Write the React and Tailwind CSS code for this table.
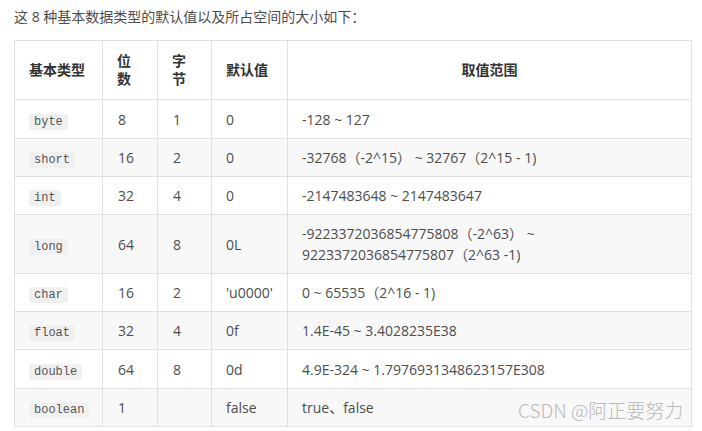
import React from 'react';

const rows = [
  { type: 'byte', bits: '8', bytes: '1', def: '0', range: '-128 ~ 127', h: 'h-[39px]' },
  { type: 'short', bits: '16', bytes: '2', def: '0', range: '-32768（-2^15） ~ 32767（2^15 - 1)', h: 'h-[38px]' },
  { type: 'int', bits: '32', bytes: '4', def: '0', range: '-2147483648 ~ 2147483647', h: 'h-[38px]' },
  {
    type: 'long',
    bits: '64',
    bytes: '8',
    def: '0L',
    range: ['-9223372036854775808（-2^63） ~', '9223372036854775807（2^63 -1)'],
    h: 'h-[59px]',
  },
  { type: 'char', bits: '16', bytes: '2', def: "'u0000'", range: '0 ~ 65535（2^16 - 1)', h: 'h-[38px]' },
  { type: 'float', bits: '32', bytes: '4', def: '0f', range: '1.4E-45 ~ 3.4028235E38', h: 'h-[38px]' },
  { type: 'double', bits: '64', bytes: '8', def: '0d', range: '4.9E-324 ~ 1.7976931348623157E308', h: 'h-[39px]' },
  { type: 'boolean', bits: '1', bytes: '', def: 'false', range: 'true、false', h: 'h-[38px]' },
];

export default function App() {
  return (
    <div className="relative w-[702px] h-[431px] bg-white overflow-hidden font-['Open_Sans','Noto_Sans_CJK_SC',sans-serif] text-[14px] text-[#4d4d4d]">
      <p className="pl-[14px] pt-[7px] h-[40px] leading-[20px]">这 8 种基本数据类型的默认值以及所占空间的大小如下：</p>

      <table className="ml-[14px] w-[677px] table-fixed border-collapse">
        <colgroup>
          <col className="w-[88px]" />
          <col className="w-[55px]" />
          <col className="w-[54px]" />
          <col className="w-[76px]" />
          <col className="w-[404px]" />
        </colgroup>
        <thead>
          <tr className="h-[59px] text-[#333] font-bold leading-[18px]">
            <th className="border border-[#dfe2e5] px-[14px] text-left font-bold">基本类型</th>
            <th className="border border-[#dfe2e5] px-[14px] text-left font-bold">位数</th>
            <th className="border border-[#dfe2e5] px-[14px] text-left font-bold">字节</th>
            <th className="border border-[#dfe2e5] px-[14px] text-left font-bold">默认值</th>
            <th className="border border-[#dfe2e5] px-[14px] text-center font-bold">取值范围</th>
          </tr>
        </thead>
        <tbody>
          {rows.map((r, i) => (
            <tr key={r.type} className={`${r.h} ${i % 2 === 1 ? 'bg-[#f8f8f8]' : 'bg-white'}`}>
              <td className="border border-[#dfe2e5] px-[14px]">
                <code className="inline-block px-[5px] h-[16px] leading-[16px] mt-[2px] rounded-[3px] bg-[#f0f0f0] text-[#555] text-[12px] font-['Liberation_Mono',monospace] align-middle">
                  {r.type}
                </code>
              </td>
              <td className="border border-[#dfe2e5] px-[15px]">{r.bits}</td>
              <td className="border border-[#dfe2e5] px-[15px]">{r.bytes}</td>
              <td className="border border-[#dfe2e5] px-[14px]">{r.def}</td>
              <td className="border border-[#dfe2e5] px-[14px] leading-[21px]">
                {Array.isArray(r.range) ? (
                  <>
                    {r.range[0]}
                    <br />
                    {r.range[1]}
                  </>
                ) : (
                  r.range
                )}
              </td>
            </tr>
          ))}
        </tbody>
      </table>

      {/* watermark */}
      <div className="absolute left-[518px] top-[398px] text-[19px] leading-[24px] font-light text-[#b8b8b8] font-['Noto_Sans_CJK_SC',sans-serif] whitespace-nowrap">
        CSDN @阿正要努力
      </div>
    </div>
  );
}
